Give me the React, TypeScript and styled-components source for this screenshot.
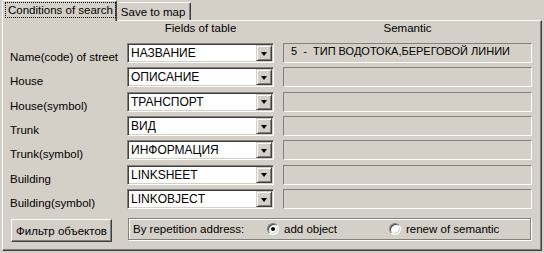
import React, { useState } from "react";
import styled, { createGlobalStyle } from "styled-components";

const GlobalStyle = createGlobalStyle`
  html, body {
    margin: 0;
    padding: 0;
    background: #d4d0c8;
  }
  body {
    font-family: "Liberation Sans", Arial, sans-serif;
    font-size: 11px;
    color: #000;
  }
`;

interface FieldRow {
  label: string;
  field: string;
  semantic: string;
}

const rows: FieldRow[] = [
  { label: "Name(code) of street", field: "НАЗВАНИЕ", semantic: "5  -  ТИП ВОДОТОКА,БЕРЕГОВОЙ ЛИНИИ" },
  { label: "House", field: "ОПИСАНИЕ", semantic: "" },
  { label: "House(symbol)", field: "ТРАНСПОРТ", semantic: "" },
  { label: "Trunk", field: "ВИД", semantic: "" },
  { label: "Trunk(symbol)", field: "ИНФОРМАЦИЯ", semantic: "" },
  { label: "Building", field: "LINKSHEET", semantic: "" },
  { label: "Building(symbol)", field: "LINKOBJECT", semantic: "" },
];

const App: React.FC = () => {
  const [mode, setMode] = useState<"add" | "renew">("add");

  return (
    <>
      <GlobalStyle />
      <Window>
        <TabStrip>
          <Tab $active>
            <FocusLabel>Conditions of search</FocusLabel>
          </Tab>
          <Tab>Save to map</Tab>
        </TabStrip>
        <Panel>
          <HeaderRow>
            <span />
            <ColumnTitle>Fields of table</ColumnTitle>
            <ColumnTitle>Semantic</ColumnTitle>
          </HeaderRow>
          <Rows>
            {rows.map((r) => (
              <React.Fragment key={r.label}>
                <RowLabel>{r.label}</RowLabel>
                <Combo>
                  <ComboText>{r.field}</ComboText>
                  <DropButton>
                    <Arrow />
                  </DropButton>
                </Combo>
                <SemanticBox>{r.semantic}</SemanticBox>
              </React.Fragment>
            ))}
          </Rows>
          <BottomRow>
            <PushButton>Фильтр объектов</PushButton>
            <GroupBox>
              <GroupCaption>By repetition address:</GroupCaption>
              <RadioOption $width={122} onClick={() => setMode("add")}>
                <RadioCircle $checked={mode === "add"} />
                add object
              </RadioOption>
              <RadioOption onClick={() => setMode("renew")}>
                <RadioCircle $checked={mode === "renew"} />
                renew of semantic
              </RadioOption>
            </GroupBox>
          </BottomRow>
        </Panel>
      </Window>
    </>
  );
};

const Window = styled.div`
  width: 544px;
  height: 253px;
  box-sizing: border-box;
  padding: 0 2px;
  background: #d4d0c8;
  display: flex;
  flex-direction: column;
`;

const TabStrip = styled.div`
  display: flex;
  align-items: flex-end;
  height: 20px;
  position: relative;
  z-index: 1;
`;

const Tab = styled.div<{ $active?: boolean }>`
  box-sizing: border-box;
  height: ${(p) => (p.$active ? "21px" : "18px")};
  margin-bottom: ${(p) => (p.$active ? "-1px" : "0")};
  padding: ${(p) => (p.$active ? "2px 1px 0 3px" : "2px 5px 0 4px")};
  background: #d4d0c8;
  border-top: 1px solid #fff;
  border-left: ${(p) => (p.$active ? "1px solid #fff" : "none")};
  border-right: 1px solid #404040;
  box-shadow: inset -1px 0 0 #808080;
  border-radius: 2px 2px 0 0;
  font-size: 11.5px;
  line-height: 14px;
  white-space: nowrap;
`;

const FocusLabel = styled.span`
  display: inline-block;
  padding: 0 2px;
  line-height: 14px;
  outline: 1px dotted #000;
`;

const Panel = styled.div`
  box-sizing: border-box;
  width: 540px;
  height: 231px;
  border-top: 1px solid #fff;
  border-left: 1px solid #fff;
  border-right: 1px solid #404040;
  border-bottom: 1px solid #404040;
  box-shadow: inset -1px -1px 0 #808080;
  padding: 0 0 0 7px;
  display: flex;
  flex-direction: column;
`;

const columns = "108px 147px 249px";

const HeaderRow = styled.div`
  display: grid;
  grid-template-columns: ${columns};
  column-gap: 9px;
  height: 21px;
  padding-top: 1px;
  box-sizing: border-box;
  line-height: 13px;
  font-size: 11.5px;
`;

const ColumnTitle = styled.div`
  text-align: center;
`;

const Rows = styled.div`
  display: grid;
  grid-template-columns: ${columns};
  grid-auto-rows: 20px;
  column-gap: 9px;
  row-gap: 4.35px;
  margin-top: 1px;
`;

const RowLabel = styled.div`
  padding-top: 8px;
  line-height: 13px;
  font-size: 11.5px;
  white-space: nowrap;
`;

const Combo = styled.div`
  box-sizing: border-box;
  height: 20px;
  display: flex;
  align-items: stretch;
  background: #fff;
  border-top: 1px solid #808080;
  border-left: 1px solid #808080;
  border-right: 1px solid #fff;
  border-bottom: 1px solid #fff;
  box-shadow: inset 1px 1px 0 #404040, inset -1px -1px 0 #d4d0c8;
  padding: 1px;
`;

const ComboText = styled.div`
  flex: 1;
  padding-left: 2px;
  line-height: 16px;
  font-size: 12px;
  overflow: hidden;
  white-space: nowrap;
`;

const DropButton = styled.div`
  box-sizing: border-box;
  width: 16px;
  background: #d4d0c8;
  border-top: 1px solid #d4d0c8;
  border-left: 1px solid #d4d0c8;
  border-right: 1px solid #404040;
  border-bottom: 1px solid #404040;
  box-shadow: inset 1px 1px 0 #fff, inset -1px -1px 0 #808080;
  display: flex;
  align-items: center;
  justify-content: center;
`;

const Arrow = styled.div`
  width: 0;
  height: 0;
  border-left: 3.5px solid transparent;
  border-right: 3.5px solid transparent;
  border-top: 4px solid #000;
  margin-top: 1px;
`;

const SemanticBox = styled.div`
  box-sizing: border-box;
  height: 20px;
  border-top: 1px solid #808080;
  border-left: 1px solid #808080;
  border-right: 1px solid #fff;
  border-bottom: 1px solid #fff;
  padding-left: 7px;
  line-height: 15px;
  font-size: 11px;
  white-space: pre;
  overflow: hidden;
`;

const BottomRow = styled.div`
  display: grid;
  grid-template-columns: 108px 404px;
  column-gap: 9px;
  margin-top: 9px;
  align-items: start;
`;

const PushButton = styled.button`
  box-sizing: border-box;
  width: 101px;
  height: 23px;
  margin: 1px 0 0 1px;
  padding: 0;
  font-family: "Liberation Sans", Arial, sans-serif;
  font-size: 11.5px;
  color: #000;
  background: #d4d0c8;
  border-top: 1px solid #fff;
  border-left: 1px solid #fff;
  border-right: 1px solid #404040;
  border-bottom: 1px solid #404040;
  box-shadow: inset -1px -1px 0 #808080;
  cursor: pointer;
`;

const GroupBox = styled.div`
  box-sizing: border-box;
  height: 22px;
  margin-left: 1px;
  border: 1px solid #808080;
  box-shadow: inset 1px 1px 0 #fff, 1px 1px 0 #fff;
  display: flex;
  align-items: center;
  padding-left: 4px;
  font-size: 11.5px;
`;

const GroupCaption = styled.span`
  width: 134px;
  white-space: nowrap;
`;

const RadioOption = styled.label<{ $width?: number }>`
  display: flex;
  align-items: center;
  gap: 5px;
  white-space: nowrap;
  cursor: pointer;
  width: ${(p) => (p.$width ? `${p.$width}px` : "auto")};
`;

const RadioCircle = styled.span<{ $checked: boolean }>`
  box-sizing: border-box;
  position: relative;
  width: 12px;
  height: 12px;
  border-radius: 50%;
  background: #fff;
  border: 1px solid;
  border-color: #808080 #fff #fff #808080;
  box-shadow: inset 1px 1px 0 #404040, inset -1px -1px 0 #d4d0c8;

  &::after {
    content: "";
    display: ${(p) => (p.$checked ? "block" : "none")};
    position: absolute;
    left: 3px;
    top: 3px;
    width: 4px;
    height: 4px;
    border-radius: 50%;
    background: #000;
  }
`;

export default App;
